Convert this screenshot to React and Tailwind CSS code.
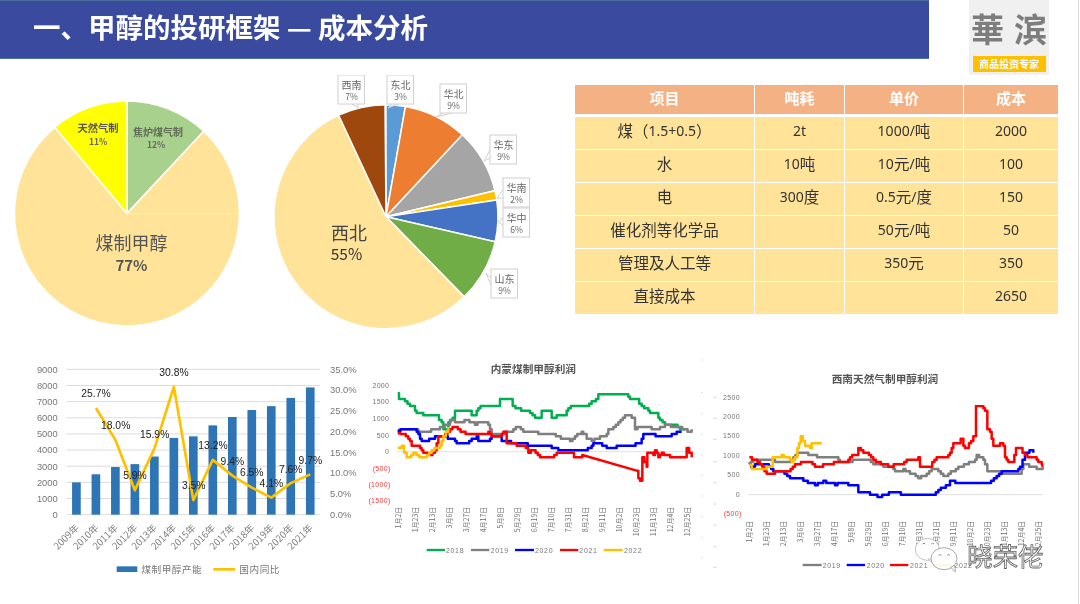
const CJK = { fontFamily: '"Noto Sans CJK SC", sans-serif' };

function polar(cx, cy, r, deg) {
  const a = ((deg - 90) * Math.PI) / 180;
  return [cx + r * Math.cos(a), cy + r * Math.sin(a)];
}
function slice(cx, cy, r, a0, a1) {
  const [x0, y0] = polar(cx, cy, r, a0);
  const [x1, y1] = polar(cx, cy, r, a1);
  const large = a1 - a0 > 180 ? 1 : 0;
  return `M${cx} ${cy}L${x0} ${y0}A${r} ${r} 0 ${large} 1 ${x1} ${y1}Z`;
}
function stair(str) {
  const pts = str.split(' ').map((s) => s.split(',').map(Number));
  const out = [pts[0].join(',')];
  let prevY = pts[0][1];
  for (let i = 1; i < pts.length; i++) {
    const [ax, ay] = pts[i - 1];
    const [bx, by] = pts[i];
    const dx = bx - ax;
    if (dx > 60) {
      out.push(`${bx},${by}`);
      prevY = by;
      continue;
    }
    const n = Math.max(1, Math.ceil(dx / 9));
    for (let k = 1; k <= n; k++) {
      const x = ax + (dx * k) / n;
      const y = Math.round((ay + ((by - ay) * k) / n) / 7) * 7;
      out.push(`${x},${prevY}`, `${x},${y}`);
      prevY = y;
    }
  }
  return out.join(' ');
}

const pie1 = [
  [0, 43, '#A9D18E'],
  [43, 320, '#FFE399'],
  [320, 360, '#FFFF00'],
];
const pie2 = [
  [0, 10, '#5B9BD5'],
  [10, 43, '#ED7D31'],
  [43, 76.6, '#A5A5A5'],
  [76.6, 81.4, '#FFC000'],
  [81.4, 102.9, '#4472C4'],
  [102.9, 135.7, '#70AD47'],
  [135.7, 335, '#FFE399'],
  [335, 359.5, '#9E480E'],
];
const callouts = [
  ['西南', '7%', 338, 75, 'M352 104L358 108L358 104'],
  ['东北', '3%', 387, 75, 'M392 104L388 108L398 104'],
  ['华北', '9%', 440, 84, 'M443 113L436 117L452 113'],
  ['华东', '9%', 490, 135, 'M490 150L484 161L490 158'],
  ['华南', '2%', 503, 178, 'M503 190L497 198L503 198'],
  ['华中', '6%', 503, 208, 'M503 218L498 222L503 225'],
  ['山东', '9%', 491, 269, 'M491 278L486 273L491 285'],
];

function Pies() {
  return (
    <svg width="540" height="265" viewBox="0 75 540 265" className="block shrink-0 blur-[0.3px]" style={CJK}>
      {pie1.map(([a, b, c]) => (
        <path key={a} d={slice(127, 213.5, 112.5, a, b)} fill={c} stroke="#fff" strokeWidth="1.5" />
      ))}
      <line x1="127" y1="213.5" x2="239" y2="213.5" stroke="#FFEDBE" strokeWidth="1" />
      <text x="98" y="132" fontSize="10.3" textAnchor="middle" fontWeight="700" fill="#555">天然气制</text>
      <text x="98" y="145" fontSize="8.5" textAnchor="middle" fontWeight="700" fill="#666">11%</text>
      <text x="158" y="136" fontSize="10" textAnchor="middle" fontWeight="700" fill="#5e6b55">焦炉煤气制</text>
      <text x="156" y="148" fontSize="8.5" textAnchor="middle" fontWeight="700" fill="#666">12%</text>
      <text x="131.5" y="250" fontSize="18" textAnchor="middle" fill="#555">煤制甲醇</text>
      <text x="131.5" y="271" fontSize="15" textAnchor="middle" fontWeight="700" fill="#555">77%</text>

      {pie2.map(([a, b, c]) => (
        <path key={a} d={slice(386, 216.7, 112, a, b)} fill={c} stroke="#fff" strokeWidth="1.5" />
      ))}
      <text x="349" y="240" fontSize="18" textAnchor="middle" fill="#444">西北</text>
      <text x="346.5" y="260" fontSize="15.5" textAnchor="middle" fill="#333">55%</text>
      {callouts.map(([n, p, x, y, tail]) => (
        <g key={n}>
          <path d={tail} fill="#fff" stroke="#d0d0d0" strokeWidth="1" />
          <rect x={x} y={y} width="26.5" height="29" fill="#fff" stroke="#d0d0d0" strokeWidth="1" />
          <text x={x + 13.5} y={y + 14} fontSize="10" textAnchor="middle" fill="#666">{n}</text>
          <text x={x + 13.5} y={y + 25} fontSize="8.5" textAnchor="middle" fill="#666">{p}</text>
        </g>
      ))}
    </svg>
  );
}

const rows = [
  ['煤（1.5+0.5）', '2t', '1000/吨', '2000'],
  ['水', '10吨', '10元/吨', '100'],
  ['电', '300度', '0.5元/度', '150'],
  ['催化剂等化学品', '', '50元/吨', '50'],
  ['管理及人工等', '', '350元', '350'],
  ['直接成本', '', '', '2650'],
];

function Mixed({ text }) {
  return text.split(/([\u4e00-\u9fff（）]+)/).map((part, i) =>
    i % 2 === 1 ? (
      <span key={i} className="text-[15.5px]" style={CJK}>{part}</span>
    ) : (
      <span key={i} className="text-[14px] font-['Noto_Sans']">{part}</span>
    )
  );
}

function CostTable() {
  return (
    <div className="ml-[35px] mt-[10px] grid h-[229px] w-[483px] shrink-0 grid-cols-[179px_89px_118px_94px] grid-rows-[31px_repeat(6,1fr)] gap-x-px gap-y-px text-[#333] blur-[0.25px]">
      {['项目', '吨耗', '单价', '成本'].map((h) => (
        <div key={h} className="mb-[2px] flex items-center justify-center bg-[#F4B183] pb-[3px] text-[15px] font-bold text-white" style={CJK}>{h}</div>
      ))}
      {rows.flat().map((c, i) => (
        <div key={i} className="flex items-center justify-center bg-[#FFE399] pb-[5px] leading-none">
          <Mixed text={c} />
        </div>
      ))}
    </div>
  );
}

const yrs = ['2009年','2010年','2011年','2012年','2013年','2014年','2015年','2016年','2017年','2018年','2019年','2020年','2021年'];
const cap = [2000,2500,2950,3130,3600,4750,4850,5530,6050,6480,6720,7230,7880];
const pct = [null,25.7,18.0,5.9,15.9,30.8,3.5,13.2,9.4,6.5,4.1,7.6,9.7];
const lblPos = [null,[288,130],[347,228],[405,378],[464,254],[522,69],[581,407],[639,286],[697,335],[755,369],[814,401],[872,358],[931,332]];

function BarChart() {
  const x0 = 200, x1 = 960, top = 58, bot = 494;
  const w = (x1 - x0) / 13;
  const cx = (i) => x0 + w * (i + 0.5);
  const pts = pct.map((p, i) => (p == null ? null : `${cx(i)},${bot - ((bot - top) * p) / 35}`)).filter(Boolean).join(' ');
  return (
    <svg width="360" height="254" viewBox="0 0 1080 762" className="block shrink-0 blur-[0.4px]" style={CJK}>
      {[...Array(10)].map((_, i) => {
        const y = bot - ((bot - top) * i) / 9;
        return (
          <g key={i}>
            <line x1={x0} x2={x1} y1={y} y2={y} stroke="#dcdcdc" strokeWidth="3" />
            <text x="173" y={y + 10} textAnchor="end" fontSize="28" fill="#777" fontFamily="Liberation Sans">{i * 1000}</text>
          </g>
        );
      })}
      {['0.0%','5.0%','10.0%','15.0%','20.0%','25.0%','30.0%','35.0%'].map((t, i) => (
        <text key={t} x="990" y={bot + 10 - ((bot - top) * i) / 7} fontSize="28" fill="#777" fontFamily="Liberation Sans">{t}</text>
      ))}
      {cap.map((v, i) => (
        <rect key={i} x={cx(i) - 13} width="26" y={bot - ((bot - top) * v) / 9000} height={((bot - top) * v) / 9000} fill="#2E75B6" />
      ))}
      {yrs.map((t, i) => (
        <text key={t} x={cx(i) + 10} y="535" fontSize="29" fill="#808080" textAnchor="end" transform={`rotate(-45 ${cx(i) + 10} 535)`}>{t}</text>
      ))}
      <polyline points={pts} fill="none" stroke="#FFC000" strokeWidth="8" strokeLinejoin="round" />
      {pct.map((p, i) => p != null && (
        <text key={i} x={lblPos[i][0]} y={lblPos[i][1] + 10} fontSize="31" textAnchor="middle" fill="#222" fontFamily="Liberation Sans">{p.toFixed(1)}%</text>
      ))}
      <rect x="350" y="649" width="62" height="17" fill="#2E75B6" />
      <text x="424" y="668" fontSize="29" fill="#777" letterSpacing="1.5">煤制甲醇产能</text>
      <line x1="640" x2="705" y1="658" y2="658" stroke="#FFC000" strokeWidth="8" />
      <text x="718" y="668" fontSize="29" fill="#777" letterSpacing="1.5">国内同比</text>
    </svg>
  );
}

const dates = ['1月2日','1月23日','2月13日','3月6日','3月27日','4月17日','5月8日','5月29日','6月19日','7月10日','7月31日','8月21日','9月11日','10月2日','10月23日','11月13日','12月4日','12月25日'];

const p2018 = '113,130 117,150 130,150 135,155 150,165 150,170 162,170 165,182 170,186 190,193 205,197 230,197 237,210 245,220 250,237 262,237 265,215 278,200 285,183 300,182 330,180 335,195 345,195 355,172 375,166 390,165 415,168 420,150 440,145 450,145 458,165 475,178 500,180 510,190 525,204 538,204 545,184 570,184 575,204 590,197 615,193 625,172 640,167 670,170 680,165 695,155 708,150 715,135 735,130 760,134 790,130 800,132 810,145 830,150 845,170 860,175 870,190 890,190 900,210 915,225 945,225 960,235 975,237';
const p2019 = '113,240 130,235 160,238 175,243 200,243 220,240 240,232 262,225 270,212 300,215 320,212 345,222 360,215 385,222 395,255 420,252 445,245 460,238 475,228 490,245 520,245 550,255 580,255 610,265 630,270 645,257 665,247 675,250 680,265 695,272 720,262 735,258 745,240 760,230 775,215 795,195 810,197 820,205 825,235 840,230 870,232 880,240 900,232 915,225 950,230 975,240 990,248 995,240';
const p2020 = '113,243 130,237 165,237 175,255 185,272 215,268 225,258 250,258 270,268 285,270 295,283 320,277 335,268 350,258 355,270 385,272 395,262 420,262 425,272 445,276 470,282 490,282 510,286 550,284 575,292 595,300 630,300 670,302 690,295 700,283 720,280 740,295 760,297 770,285 820,285 840,280 850,255 870,252 895,258 925,260 935,255 950,243 965,248';
const p2021 = '113,250 130,255 145,265 155,285 180,293 190,305 210,315 225,300 235,258 255,255 270,235 285,232 310,248 330,250 335,255 350,253 370,252 385,245 395,258 420,258 430,248 438,248 440,280 460,280 470,285 490,285 505,305 520,303 540,323 575,323 590,310 625,307 635,305 642,323 660,320 667,312 830,362 835,385 845,392 847,320 860,348 862,310 880,312 885,300 895,320 905,310 925,315 935,325 960,320 975,322 980,295 995,320';
const p2022 = '113,293 125,290 140,325 160,310 178,322 200,318 215,300 240,290 250,260 265,230';

const q2019 = '115,340 130,330 180,330 210,335 240,335 250,320 262,305 285,305 295,315 330,320 345,322 380,325 390,338 420,333 450,328 475,330 490,340 520,348 545,352 555,365 580,360 600,370 625,382 650,372 665,355 685,362 700,380 715,372 745,350 770,340 790,335 800,318 815,320 825,340 832,365 860,365 900,372 930,368 940,345 975,350 985,360 998,348';
const q2020 = '120,350 135,343 170,345 190,362 215,365 240,383 270,383 280,393 300,397 315,405 340,393 375,405 390,398 440,407 445,425 480,432 510,440 530,432 550,425 580,435 640,436 670,432 685,420 700,410 715,405 720,393 760,400 800,402 835,397 860,378 875,365 920,367 930,350 945,310 965,300 970,310';
const q2021 = '118,322 150,340 170,372 190,372 195,362 235,362 255,340 300,338 315,348 355,345 380,335 410,335 420,320 440,315 445,295 460,310 470,310 490,332 520,342 535,350 575,340 590,328 625,325 630,347 660,347 680,322 710,322 720,305 730,280 745,278 752,265 760,290 770,295 790,260 798,170 815,170 825,180 832,240 840,242 850,288 860,290 870,282 880,284 885,320 895,335 908,335 918,295 930,295 945,318 975,323 985,335 995,340 997,350';
const q2022 = '118,345 125,358 165,358 170,348 185,350 188,320 215,318 235,325 245,338 255,320 262,295 272,260 285,285 300,295 305,283 335,280';

function Legend({ items, y }) {
  return items.map(([name, x0, x1, tx, c]) => (
    <g key={name}>
      <line x1={x0} x2={x1} y1={y} y2={y} stroke={c} strokeWidth="7" />
      <text x={tx} y={y + 8} fontSize="21" fill="#777" letterSpacing="2" fontFamily="Liberation Sans">{name}</text>
    </g>
  ));
}

function DateLabels({ start, step, top }) {
  return dates.map((d, i) => {
    const x = start + step * i;
    return (
      <text key={d} x={x + 7} y={top} fontSize="21" fill="#6f6f6f" textAnchor="end" transform={`rotate(-90 ${x + 7} ${top})`}>{d}</text>
    );
  });
}

function Profit1() {
  const ax = [['2000',107],['1500',156],['1000',205],['500',256],['0',304]];
  const neg = [['(500)',355],['(1000)',404],['(1500)',453]];
  return (
    <svg width="350" height="254" viewBox="0 0 1050 762" className="block shrink-0 blur-[0.4px]" style={CJK}>
      <text x="520" y="69" fontSize="32" textAnchor="middle" fontWeight="700" fill="#555">内蒙煤制甲醇利润</text>
      {ax.map(([t, y]) => <text key={t} x="88" y={y + 7} textAnchor="end" fontSize="21" letterSpacing="1" fill="#777" fontFamily="Liberation Sans">{t}</text>)}
      {neg.map(([t, y]) => <text key={t} x="92" y={y + 7} textAnchor="end" fontSize="21" letterSpacing="1" fill="#f03b3b" fontFamily="Liberation Sans">{t}</text>)}
      <line x1="110" x2="1000" y1="305" y2="305" stroke="#e6e6e6" strokeWidth="4" />
      <DateLabels start={115} step={51} top={470} />
      {[[p2018,'#00B050'],[p2019,'#7F7F7F'],[p2020,'#0000FF'],[p2021,'#FF0000'],[p2022,'#FFC000']].map(([p, c]) => (
        <polyline key={c} points={stair(p)} fill="none" stroke={c} strokeWidth="7.5" strokeLinejoin="round" />
      ))}
      <Legend y={600} items={[['2018',200,255,258,'#00B050'],['2019',333,388,392,'#7F7F7F'],['2020',465,522,525,'#0000FF'],['2021',600,655,658,'#FF0000'],['2022',732,788,792,'#FFC000']]} />
      {[30,128,190,254,316,376,438,500,562,622].map((y) => <line key={y} x1="1023" x2="1029" y1={y} y2={y} stroke="#e4e4e4" strokeWidth="3" />)}
    </svg>
  );
}

function Profit2() {
  const ax = [['2500',142],['2000',200],['1500',258],['1000',316],['500',375],['0',434]];
  return (
    <svg width="368" height="254" viewBox="0 0 1104 762" className="block shrink-0 overflow-visible blur-[0.4px]" style={CJK}>
      <text x="525" y="99" fontSize="32" textAnchor="middle" fontWeight="700" fill="#555">西南天然气制甲醇利润</text>
      {ax.map(([t, y]) => <text key={t} x="90" y={y + 7} textAnchor="end" fontSize="21" letterSpacing="1" fill="#777" fontFamily="Liberation Sans">{t}</text>)}
      <text x="95" y="499" textAnchor="end" fontSize="21" letterSpacing="1" fill="#f03b3b" fontFamily="Liberation Sans">(500)</text>
      {[142,205,268,335,398,462,525,590,652].map((y) => <line key={y} x1="10" x2="20" y1={y} y2={y} stroke="#d8d8d8" strokeWidth="3" />)}
      <line x1="115" x2="998" y1="434" y2="434" stroke="#e0e0e0" strokeWidth="3" />
      <DateLabels start={120} step={50.9} top={512} />
      {[[q2019,'#7F7F7F'],[q2020,'#0000FF'],[q2021,'#FF0000'],[q2022,'#FFC000']].map(([p, c]) => (
        <polyline key={c} points={stair(p)} fill="none" stroke={c} strokeWidth="7.5" strokeLinejoin="round" />
      ))}
      <Legend y={645} items={[['2019',278,335,338,'#7F7F7F'],['2020',410,465,470,'#0000FF'],['2021',540,595,600,'#FF0000'],['2022',670,725,733,'#FFC000']]} />
      <ellipse cx="652" cy="598" rx="36" ry="33" fill="#fff" fillOpacity="0.92" stroke="#b5b5b5" strokeWidth="2.5" />
      <path d="M655 628l16 12-2-16z" fill="#fff" stroke="#b5b5b5" strokeWidth="2.5" />
      <ellipse cx="702" cy="626" rx="39" ry="33" fill="#fff" fillOpacity="0.86" stroke="#999" strokeWidth="2.5" />
      <path d="M722 652l14 14-2-20z" fill="#fff" stroke="#999" strokeWidth="2.5" />
      <path d="M638 582q4-5 8 0M664 582q4-5 8 0M686 616q4-5 8 0M712 616q4-5 8 0" fill="none" stroke="#777" strokeWidth="2.5" />
      <text x="772" y="648" fontSize="76" fill="#fff" stroke="#666" strokeWidth="2.5">晓荣佬</text>
    </svg>
  );
}

export default function App() {
  return (
    <div className="relative h-[604px] w-[1080px] overflow-hidden bg-white" style={CJK}>
      <div className="flex h-[75px] items-start">
        <div className="flex h-[59px] w-[929px] items-center border-y border-[#4a6f9c] bg-[#3A4A9F] pb-[5px] pl-[33px] text-[27.5px] font-bold whitespace-pre text-white blur-[0.3px]">
          一、甲醇的投研框架 — 成本分析
        </div>
        <div className="ml-[40px] flex h-[75px] w-[80px] flex-col items-center bg-[#F0F0F0]">
          <div className="flex h-[56px] items-center gap-[10px] text-[33px] leading-none font-bold text-[#7d7d7d] blur-[0.5px]">
            <span>華</span><span>滨</span>
          </div>
          <div className="flex h-[16px] w-[73px] items-center justify-center bg-[#FFC000] text-[10px] leading-none font-bold whitespace-nowrap text-white blur-[0.2px]">商品投资专家</div>
        </div>
      </div>
      <div className="flex h-[265px] items-start">
        <Pies />
        <CostTable />
      </div>
      <div className="mt-[10px] flex h-[254px] items-start">
        <BarChart />
        <Profit1 />
        <Profit2 />
      </div>
      <div className="absolute top-0 right-[1px] h-full w-px bg-[#d9d9d9]" />
    </div>
  );
}
